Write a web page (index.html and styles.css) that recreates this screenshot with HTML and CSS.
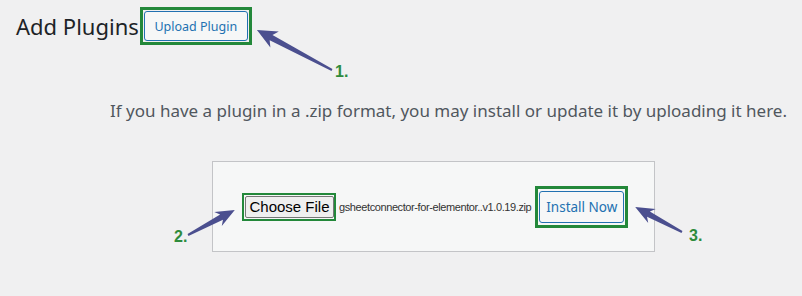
FILE: index.html
```html
<!DOCTYPE html>
<html lang="en">
<head>
    <meta charset="UTF-8">
    <title>Add Plugins</title>
    <link rel="stylesheet" href="styles.css">
</head>
<body>
    <!-- page header -->
    <div class="wrap-header">
        <h1 class="page-title">Add Plugins</h1>
        <span class="mark mark-upload">
            <button class="btn-secondary">Upload Plugin</button>
        </span>
    </div>

    <p class="install-help">If you have a plugin in a .zip format, you may install or update it by uploading it here.</p>

    <!-- upload form -->
    <div class="upload-form">
        <span class="mark mark-file">
            <button class="btn-file">Choose File</button>
        </span>
        <span class="file-name">gsheetconnector-for-elementor..v1.0.19.zip</span>
        <span class="mark mark-install">
            <button class="btn-secondary btn-install">Install Now</button>
        </span>
    </div>

    <!-- annotations -->
    <svg class="arrows" width="802" height="296" viewBox="0 0 802 296">
        <g fill="#4b4f8f">
            <path transform="translate(332 70) rotate(208)" d="M0,-1 L69,-3 L65,-9 L85,0 L65,9 L69,3 L0,1 Z"/>
            <path transform="translate(188 235) rotate(-28)" d="M0,-1 L38,-3 L34,-8 L53,0 L34,8 L38,3 L0,1 Z"/>
            <path transform="translate(682 232) rotate(208)" d="M0,-1 L38,-3 L34,-8 L53,0 L34,8 L38,3 L0,1 Z"/>
        </g>
    </svg>
    <span class="step step-1">1.</span>
    <span class="step step-2">2.</span>
    <span class="step step-3">3.</span>
</body>
</html>
```

FILE: styles.css
```css
* {
    margin: 0;
    padding: 0;
    box-sizing: border-box;
}

body {
    position: relative;
    width: 802px;
    height: 296px;
    overflow: hidden;
    background: #f0f0f1;
    font-family: "Noto Sans", "Open Sans", sans-serif;
    color: #1d2327;
}

/* header */
.wrap-header {
    display: flex;
    align-items: center;
    padding: 7px 0 0 16px;
}

.page-title {
    font-size: 22px;
    font-weight: 400;
    line-height: 38px;
    margin-right: 1px;
}

/* green highlight boxes */
.mark {
    display: inline-flex;
    border: 3px solid #23883a;
    padding: 1px;
}

.btn-secondary {
    font-family: inherit;
    font-size: 12.5px;
    color: #2271b1;
    background: #f6f7f7;
    border: 1px solid #2271b1;
    border-radius: 3px;
    height: 30px;
    padding: 0;
    white-space: nowrap;
}

.mark-upload .btn-secondary {
    width: 104px;
}

.install-help {
    padding: 54px 0 0 110px;
    font-size: 17px;
    color: #50575e;
    line-height: 24px;
    white-space: nowrap;
}

/* upload box */
.upload-form {
    display: flex;
    align-items: center;
    margin: 38px 0 0 212px;
    width: 443px;
    height: 91px;
    padding: 0 0 0 29px;
    background: #f6f7f7;
    border: 1px solid #c3c4c7;
}

.mark-file {
    border-width: 2px;
    padding: 1px 0 1px 1px;
}

.btn-file {
    font-family: "Liberation Sans", Arial, sans-serif;
    font-size: 15px;
    color: #000;
    background: #efefef;
    border: 1px solid #767676;
    border-radius: 2px;
    height: 22px;
    width: 89px;
}

.file-name {
    font-family: "Liberation Sans", Arial, sans-serif;
    font-size: 11px;
    color: #333;
    margin: 0 4px 0 3px;
    letter-spacing: -0.4px;
    white-space: nowrap;
}

.mark-install {
    padding: 2px 1px;
}

.btn-install {
    font-size: 13.5px;
    height: 32px;
    width: 85px;
}

/* annotation overlay */
.arrows {
    position: absolute;
    left: 0;
    top: 0;
}

.step {
    position: absolute;
    font-family: "Liberation Sans", Arial, sans-serif;
    font-weight: bold;
    font-size: 16px;
    color: #2e8b3c;
}

.step-1 { left: 335px; top: 63px; }
.step-2 { left: 174px; top: 228px; }
.step-3 { left: 689px; top: 227px; }
```
